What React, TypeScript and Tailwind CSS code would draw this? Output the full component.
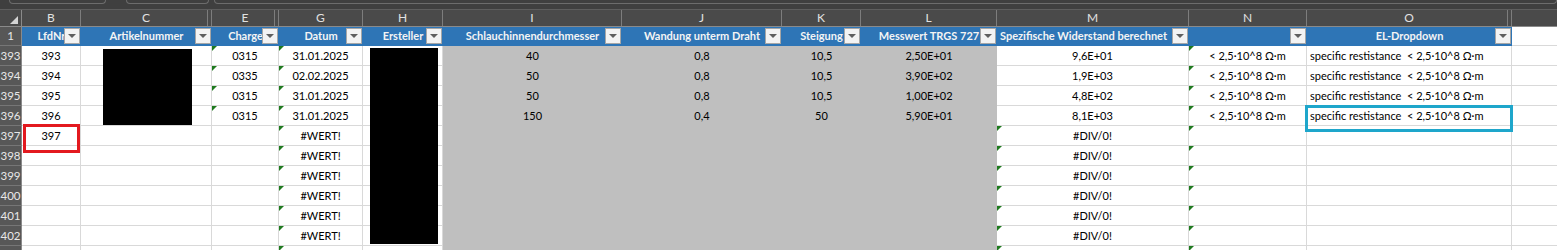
import React from "react";

type Col = { key: string; w: string; gray?: boolean; hiddenAfter?: boolean };

const cols: Col[] = [
  { key: "B", w: "w-[59px]" },
  { key: "C", w: "w-[131px]", hiddenAfter: true },
  { key: "E", w: "w-[67px]", hiddenAfter: true },
  { key: "G", w: "w-[84px]" },
  { key: "H", w: "w-[80px]" },
  { key: "I", w: "w-[179px]", gray: true },
  { key: "J", w: "w-[160px]", gray: true },
  { key: "K", w: "w-[79px]", gray: true },
  { key: "L", w: "w-[136px]", gray: true },
  { key: "M", w: "w-[192px]" },
  { key: "N", w: "w-[118px]" },
  { key: "O", w: "w-[205px]", hiddenAfter: true },
  { key: "", w: "w-[60px]" },
];

const headers: Record<string, string> = {
  B: "LfdNr",
  C: "Artikelnummer",
  E: "Charge",
  G: "Datum",
  H: "Ersteller",
  I: "Schlauchinnendurchmesser",
  J: "Wandung unterm Draht",
  K: "Steigung",
  L: "Messwert TRGS 727",
  M: "Spezifische Widerstand berechnet",
  N: "",
  O: "EL-Dropdown",
};

const ohm = "< 2,5·10^8 Ω·m";
const spec = "specific restistance  < 2,5·10^8 Ω·m";

const filled = [
  { B: "393", E: "0315", G: "31.01.2025", I: "40", J: "0,8", K: "10,5", L: "2,50E+01", M: "9,6E+01", N: ohm, O: spec },
  { B: "394", E: "0335", G: "02.02.2025", I: "50", J: "0,8", K: "10,5", L: "3,90E+02", M: "1,9E+03", N: ohm, O: spec },
  { B: "395", E: "0315", G: "31.01.2025", I: "50", J: "0,8", K: "10,5", L: "1,00E+02", M: "4,8E+02", N: ohm, O: spec },
  { B: "396", E: "0315", G: "31.01.2025", I: "150", J: "0,4", K: "50", L: "5,90E+01", M: "8,1E+03", N: ohm, O: spec },
];

// row 403 only peeks in at the bottom edge, its text is below the fold
const rows: { n: number; v: Record<string, string>; peek?: boolean }[] = [];
for (let i = 0; i < 11; i++) {
  const n = 393 + i;
  if (i < 4) rows.push({ n, v: filled[i] });
  else if (n === 397) rows.push({ n, v: { B: "397", G: "#WERT!", M: "#DIV/0!" } });
  else if (n === 403) rows.push({ n, v: {}, peek: true });
  else rows.push({ n, v: { G: "#WERT!", M: "#DIV/0!" } });
}

function Flag() {
  return (
    <span className="absolute left-0 top-0 w-0 h-0 border-t-[5px] border-r-[5px] border-t-[#1f7a1f] border-r-transparent" />
  );
}

function FilterButton() {
  return (
    <span className="absolute right-[1px] top-[1px] w-[16px] h-[16px] bg-[#f3f3f3] border border-[#a6a6a6] flex items-center justify-center">
      <span className="w-0 h-0 border-l-[4px] border-r-[4px] border-t-[4px] border-l-transparent border-r-transparent border-t-[#5f5f5f]" />
    </span>
  );
}

function hasFlag(key: string, n: number) {
  if (key === "G" || key === "N") return true;
  if (key === "E") return n <= 396;
  if (key === "M") return n >= 397;
  return false;
}

export default function App() {
  return (
    <div className="relative w-[1557px] h-[250px] overflow-hidden bg-white font-['Lato','Liberation_Sans',sans-serif] text-[11px] text-black">
      {/* toolbar bottom edge */}
      <div className="h-[10px] bg-[#3f3f3f] border-b border-[#5e5e5e] flex items-start">
        <div className="ml-[9px] w-[101px] h-[4px] border border-t-0 border-[#6c6c6c] rounded-b-[5px]" />
        <div className="ml-[20px] w-[86px] h-[4px] border border-t-0 border-[#6c6c6c] rounded-b-[5px]" />
        <div className="ml-[5px] w-[1400px] h-[4px] border border-t-0 border-[#6c6c6c] rounded-b-[5px]" />
      </div>

      {/* column letters */}
      <div className="flex h-[17px] bg-[#4a4a4a] border-b border-[#8a8a8a] text-[#e2e2e2] text-[12px]">
        <div className="relative w-[22px] shrink-0 border-r border-[#8a8a8a]">
          <span className="absolute right-[3px] bottom-[2px] w-0 h-0 border-l-[8px] border-b-[8px] border-l-transparent border-b-[#d4d4d4]" />
        </div>
        {cols.map((c, i) => (
          <div
            key={i}
            className={`${c.w} shrink-0 flex items-center justify-center border-r border-[#7d7d7d] ${
              c.hiddenAfter ? "shadow-[inset_-3px_0_0_#4a4a4a,inset_-4px_0_0_#7d7d7d]" : ""
            }`}
          >
            {c.key}
          </div>
        ))}
      </div>

      {/* table header row */}
      <div className="flex h-[19px]">
        <div className="w-[22px] shrink-0 bg-[#575757] border-r border-[#8a8a8a] border-b border-b-[#767676] text-[#e8e8e8] text-[11.5px] flex items-center justify-center">
          1
        </div>
        {cols.map((c, i) =>
          c.key === "" ? (
            <div key={i} className={`${c.w} shrink-0 border-b border-[#d9d9d9]`} />
          ) : (
            <div
              key={i}
              className={`${c.w} shrink-0 relative bg-[#2e75b6] text-[#f4f4f4] font-bold whitespace-nowrap overflow-hidden flex items-center ${
                c.key === "M" ? "justify-start pl-[3px]" : "justify-center"
              }`}
            >
              {headers[c.key]}
              <FilterButton />
            </div>
          )
        )}
      </div>

      {/* data rows */}
      {rows.map((r) => (
        <div key={r.n} className="flex h-[20px]">
          <div className="w-[22px] shrink-0 bg-[#575757] border-r border-[#8a8a8a] border-b border-b-[#767676] text-[#e8e8e8] text-[11.5px] flex items-center justify-center">
            {r.peek ? "" : r.n}
          </div>
          {cols.map((c, i) => (
            <div
              key={i}
              className={`${c.w} shrink-0 relative whitespace-pre overflow-hidden flex items-center pt-[2px] ${
                c.gray ? "bg-[#bfbfbf] border-b border-[#bfbfbf]" : "border-r border-b border-[#d9d9d9]"
              } ${c.key === "O" ? "justify-start pl-[3px]" : "justify-center"}`}
            >
              {hasFlag(c.key, r.n) && <Flag />}
              {r.v[c.key] ?? ""}
            </div>
          ))}
        </div>
      ))}

      {/* redactions */}
      <div className="absolute left-[103px] top-[49px] w-[89px] h-[76px] bg-black" />
      <div className="absolute left-[370px] top-[48px] w-[68px] h-[196px] bg-black" />

      {/* annotations */}
      <div className="absolute left-[23px] top-[124px] w-[57px] h-[29px] border-[3px] border-[#e3191f]" />
      <div className="absolute left-[1305px] top-[105px] w-[208px] h-[27px] border-[3px] border-[#1ea6cb]" />
    </div>
  );
}
